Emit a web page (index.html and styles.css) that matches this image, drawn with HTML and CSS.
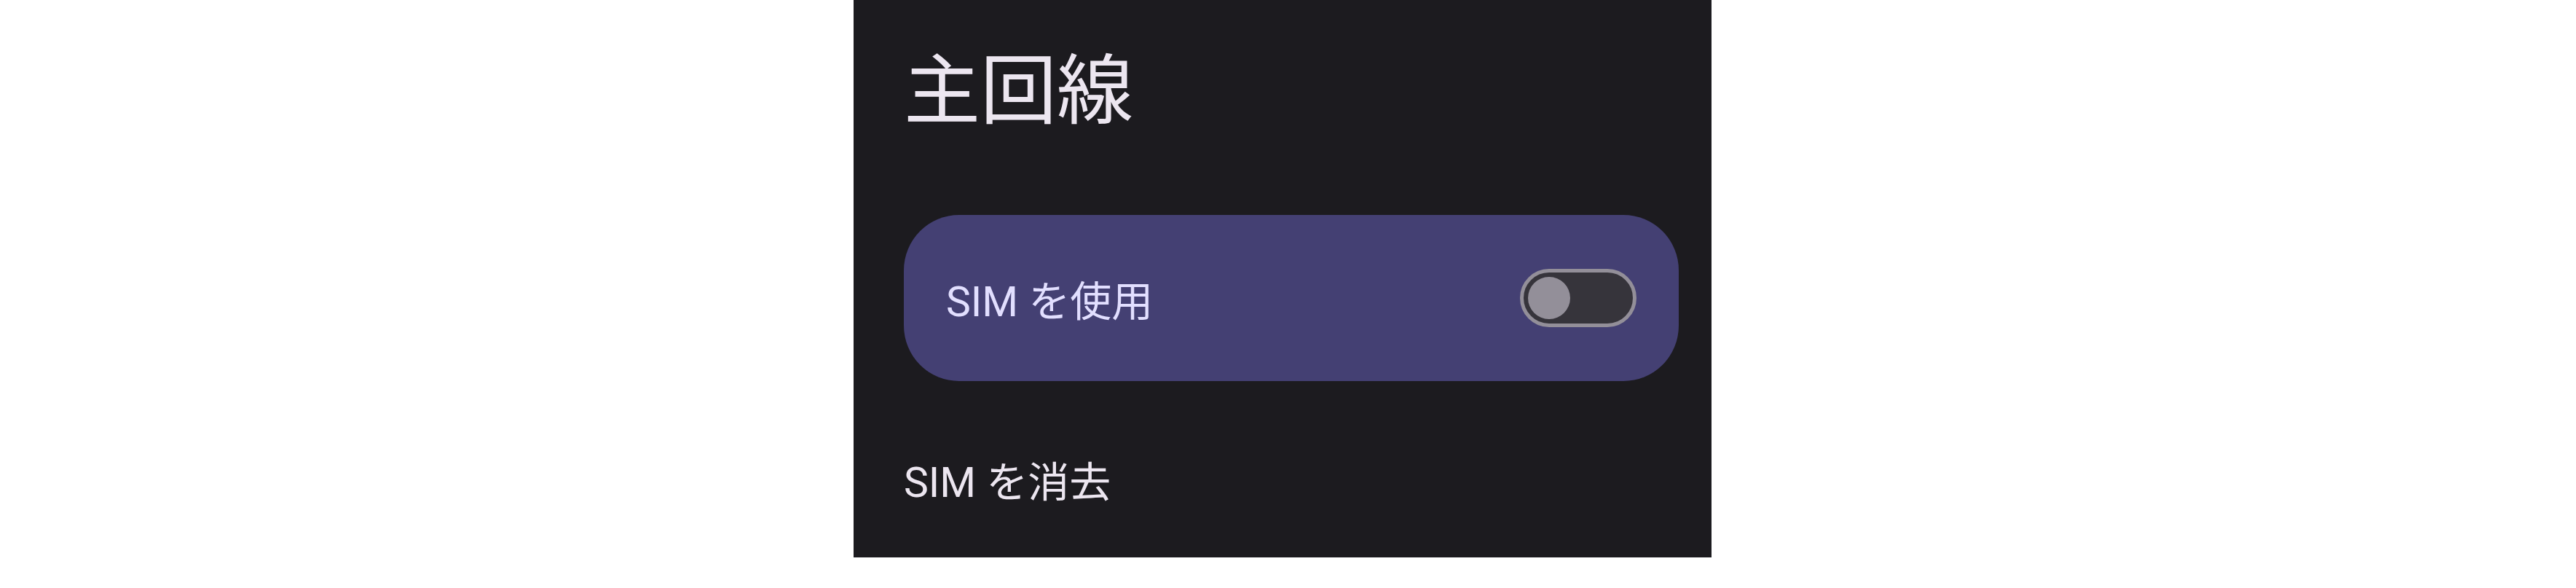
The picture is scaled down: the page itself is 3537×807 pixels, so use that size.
FILE: index.html
```html
<!DOCTYPE html>
<html lang="ja">
<head>
    <meta charset="UTF-8">
    <meta name="viewport" content="width=device-width, initial-scale=1.0">
    <title>主回線</title>
    <link rel="stylesheet" href="styles.css">
</head>
<body>
    <div class="screen">
        <h1 class="page-title">主回線</h1>
        <div class="switch-card">
            <div class="switch-label">SIM を使用</div>
            <div class="toggle">
                <div class="toggle-thumb"></div>
            </div>
        </div>
        <div class="list-item">SIM を消去</div>
    </div>
</body>
</html>
```

FILE: styles.css
```css
body {
    margin: 0;
    background-color: #ffffff;
    font-family: Roboto, "Noto Sans CJK JP", sans-serif;
}
.screen {
    width: 1178px;
    height: 765px;
    margin-left: 1172px;
    padding: 0 45px 0 69px;
    box-sizing: border-box;
    background-color: #1c1b1f;
    overflow: hidden;
}
.page-title {
    margin: 0;
    padding-top: 64px;
    font-family: "Noto Sans CJK JP", sans-serif;
    font-size: 105px;
    line-height: 102px;
    font-weight: 400;
    color: #ece6f0;
}
.switch-card {
    display: flex;
    align-items: center;
    justify-content: space-between;
    height: 228px;
    margin-top: 129px;
    padding: 0 58px;
    border-radius: 76px;
    background-color: #444073;
}
.switch-label {
    font-size: 57px;
    color: #e2dfff;
}
.toggle {
    display: flex;
    align-items: center;
    width: 160px;
    height: 80px;
    box-sizing: border-box;
    padding-left: 6px;
    border: 5px solid #938f99;
    border-radius: 40px;
    background-color: #36343b;
}
.toggle-thumb {
    width: 58px;
    height: 58px;
    border-radius: 50%;
    background-color: #938f99;
}
.list-item {
    margin-top: 100px;
    font-size: 57px;
    line-height: 80px;
    color: #ece6f0;
}
```
